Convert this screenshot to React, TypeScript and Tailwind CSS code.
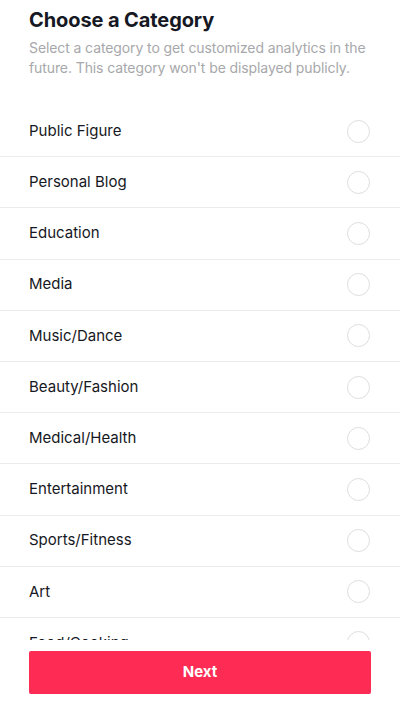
import * as React from "react"

const categories = [
  "Public Figure",
  "Personal Blog",
  "Education",
  "Media",
  "Music/Dance",
  "Beauty/Fashion",
  "Medical/Health",
  "Entertainment",
  "Sports/Fitness",
  "Art",
  "Food/Cooking",
  "Travel",
]

export default function App() {
  const [selected, setSelected] = React.useState<string | null>(null)

  return (
    <div className="flex h-[707px] w-[400px] flex-col bg-white font-['Inter','Liberation_Sans',sans-serif] text-[#161823]">
      <div className="px-[29px] pt-[6px]">
        <h1 className="text-[20px] font-bold leading-[28px] tracking-[-0.1px]">Choose a Category</h1>
        <p className="mt-[4px] pr-[4px] text-[14px] leading-[20px] tracking-[-0.1px] text-[#a7a8ab]">
          Select a category to get customized analytics in the future. This category won't be displayed publicly.
        </p>
      </div>

      <div className="mt-[28px] min-h-0 flex-1 overflow-hidden">
        {categories.map((c) => (
          <button
            key={c}
            onClick={() => setSelected(c)}
            className="flex h-[51.2px] w-full items-center justify-between border-b border-[#ececec] pl-[29px] pr-[30px] text-left"
          >
            <span className="text-[15px]">{c}</span>
            <span
              className={
                selected === c
                  ? "h-[23px] w-[23px] rounded-full border-[7px] border-[#fe2c55]"
                  : "h-[23px] w-[23px] rounded-full border-[1.5px] border-[#dedede]"
              }
            />
          </button>
        ))}
      </div>

      <div className="px-[29px] pb-[13px] pt-[11px]">
        <button className="h-[43px] w-full rounded-[2px] bg-[#fe2c55] text-[15px] font-bold text-white">
          Next
        </button>
      </div>
    </div>
  )
}
